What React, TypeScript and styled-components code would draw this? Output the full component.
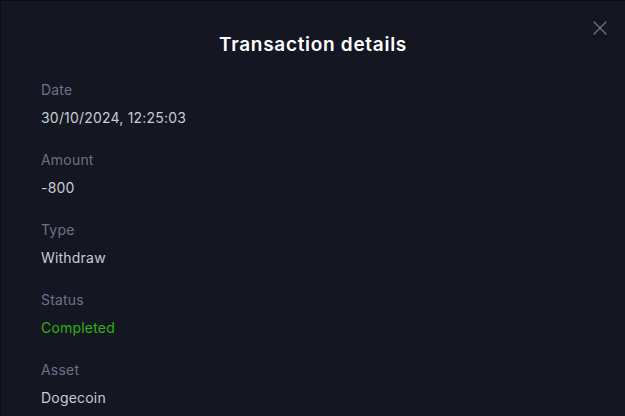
import React from "react";
import styled, { createGlobalStyle } from "styled-components";

type Detail = {
  label: string;
  value: string;
  tone?: "default" | "success";
};

const details: Detail[] = [
  { label: "Date", value: "30/10/2024, 12:25:03" },
  { label: "Amount", value: "-800" },
  { label: "Type", value: "Withdraw" },
  { label: "Status", value: "Completed", tone: "success" },
  { label: "Asset", value: "Dogecoin" },
];

const App: React.FC = () => {
  return (
    <>
      <GlobalStyle />
      <Modal>
        <CloseButton aria-label="Close">
          <svg width="14" height="14" viewBox="0 0 14 14" fill="none">
            <path d="M1 1L13 13M13 1L1 13" stroke="#6f7289" strokeWidth="1.3" strokeLinecap="round" />
          </svg>
        </CloseButton>
        <Title>Transaction details</Title>
        <List>
          {details.map((d) => (
            <Item key={d.label}>
              <Label>{d.label}</Label>
              <Value tone={d.tone ?? "default"}>{d.value}</Value>
            </Item>
          ))}
        </List>
      </Modal>
    </>
  );
};

export default App;

const GlobalStyle = createGlobalStyle`
  html, body {
    margin: 0;
    padding: 0;
    background: #141622;
  }
  body {
    font-family: Inter, "Noto Sans", sans-serif;
  }
`;

const Modal = styled.div`
  position: relative;
  box-sizing: border-box;
  width: 625px;
  height: 416px;
  overflow: hidden;
  background: #141622;
  border-top: 1px solid #0c0d14;
  border-left: 1px solid #0c0d14;
  padding: 32px 40px 0 40px;
`;

const CloseButton = styled.button`
  position: absolute;
  top: 19px;
  right: 17px;
  width: 16px;
  height: 16px;
  padding: 0;
  border: none;
  background: none;
  display: flex;
  align-items: center;
  justify-content: center;
  cursor: pointer;
`;

const Title = styled.h2`
  margin: 0;
  text-align: center;
  color: #ffffff;
  font-size: 19px;
  font-weight: 600;
  line-height: 24px;
  letter-spacing: 0.7px;
`;

const List = styled.div`
  display: flex;
  flex-direction: column;
  gap: 22px;
  margin-top: 23px;
`;

const Item = styled.div`
  display: flex;
  flex-direction: column;
  gap: 8px;
`;

const Label = styled.div`
  color: #6e7189;
  font-size: 14px;
  line-height: 20px;
  letter-spacing: 0.2px;
`;

const Value = styled.div<{ tone: "default" | "success" }>`
  color: ${({ tone }) => (tone === "success" ? "#2eb314" : "#c9cbd6")};
  font-size: 14px;
  line-height: 20px;
  letter-spacing: 0.2px;
`;
